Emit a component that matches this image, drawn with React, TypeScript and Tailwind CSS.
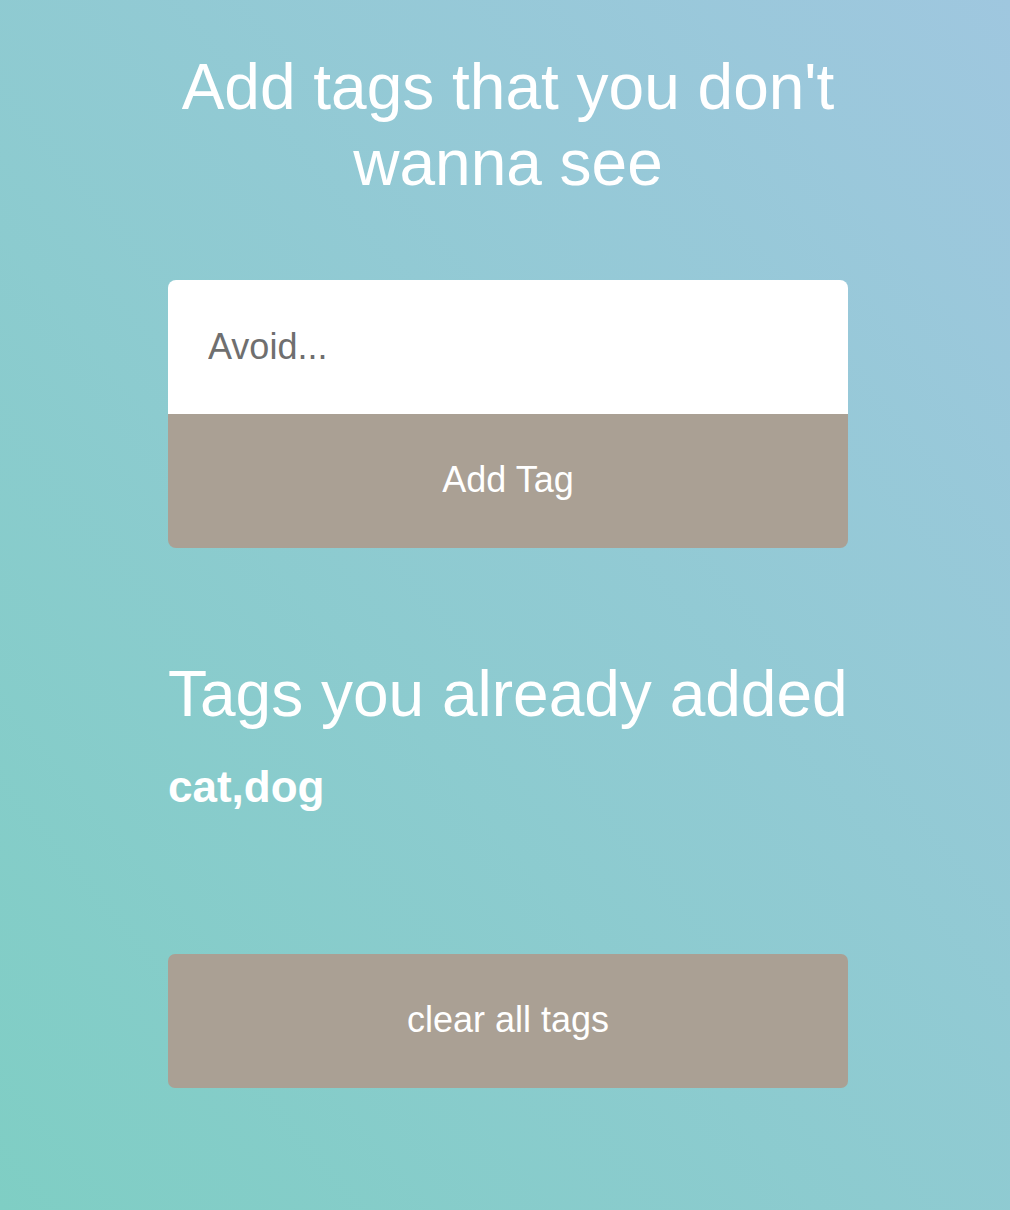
import { useState } from "react";

export default function App() {
  const [tag, setTag] = useState("");
  const [tags, setTags] = useState<string[]>(["cat", "dog"]);

  const addTag = () => {
    if (tag.trim()) {
      setTags((prev) => [...prev, tag.trim()]);
      setTag("");
    }
  };

  return (
    <div
      className="min-h-[1210px] w-full bg-[linear-gradient(to_top_right,#7fcec4,#9fc7df)] text-white"
      style={{ fontFamily: '"Liberation Sans", Arial, Helvetica, sans-serif' }}
    >
      <div className="ml-[168px] w-[680px] pt-[49px]">
        <h1 className="text-center text-[64px] leading-[76px] font-normal -mx-[20px]">
          Add tags that you don't wanna see
        </h1>

        <div className="mt-[79px]">
          <input
            type="text"
            placeholder="Avoid..."
            value={tag}
            onChange={(e) => setTag(e.target.value)}
            className="block h-[134px] w-full rounded-t-[8px] bg-white px-[40px] text-[36px] text-[#333] outline-none placeholder:text-[#6f6f6f]"
          />
          <button
            onClick={addTag}
            className="block h-[134px] w-full rounded-b-[8px] bg-[#aaa094] text-[36px] leading-[36px] text-white pb-[3px]"
          >
            Add Tag
          </button>
        </div>

        <h2 className="mt-[108px] text-[64px] leading-[76px] font-normal whitespace-nowrap">
          Tags you already added
        </h2>
        <p className="mt-[33px] text-[44px] leading-[44px] font-bold">{tags.join(",")}</p>

        <button
          onClick={() => setTags([])}
          className="mt-[145px] block h-[134px] w-full rounded-[7px] bg-[#aaa094] text-[36px] leading-[36px] text-white pb-[2px]"
        >
          clear all tags
        </button>
      </div>
    </div>
  );
}
